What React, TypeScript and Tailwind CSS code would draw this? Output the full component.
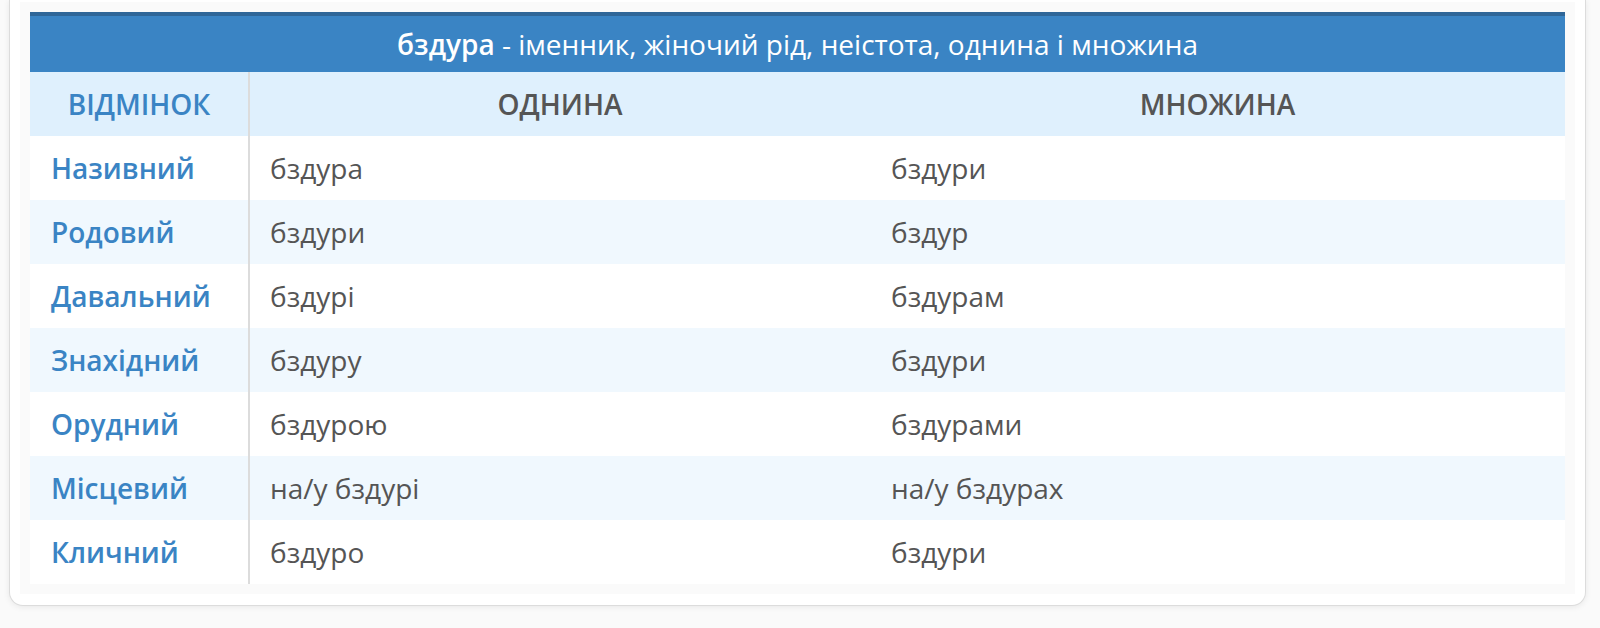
import React from 'react';

// Таблиця відмінювання іменника
const rows: [string, string, string][] = [
  ['Називний', 'бздура', 'бздури'],
  ['Родовий', 'бздури', 'бздур'],
  ['Давальний', 'бздурі', 'бздурам'],
  ['Знахідний', 'бздуру', 'бздури'],
  ['Орудний', 'бздурою', 'бздурами'],
  ['Місцевий', 'на/у бздурі', 'на/у бздурах'],
  ['Кличний', 'бздуро', 'бздури'],
];

export default function App() {
  return (
    <div
      className="min-h-[628px] bg-[#fafafa] pl-[9px] pr-[14px]"
      style={{ fontFamily: '"Open Sans", "Noto Sans", sans-serif' }}
    >
      <div className="bg-white border border-t-0 border-[#dcdcdc] rounded-b-[14px] shadow-[0_1px_6px_rgba(0,0,0,0.08)] px-[10px] pt-[2px] pb-[11px]">
        <div className="bg-[#fafafa] p-[10px]">
          <table className="w-full border-collapse table-fixed">
            <colgroup>
              <col className="w-[219px]" />
              <col className="w-[621px]" />
              <col />
            </colgroup>
            <thead>
              <tr>
                <th
                  colSpan={3}
                  className="h-[58px] p-0 bg-[#3a84c4] border-t-4 border-[#2f6698] text-white text-[28px] font-normal text-center leading-[54px]"
                >
                  <span className="font-semibold">бздура</span> - іменник, жіночий рід, неістота, однина і множина
                </th>
              </tr>
              <tr className="bg-[#dff0fd] h-[64px] uppercase text-[28px]">
                <th className="text-[#3a84c4] font-semibold text-center border-r-2 border-[#dcdcdc]">Відмінок</th>
                <th className="text-[#555] font-semibold text-center">Однина</th>
                <th className="text-[#555] font-semibold text-center">Множина</th>
              </tr>
            </thead>
            <tbody>
              {rows.map((r, i) => (
                <tr key={r[0]} className={`h-[64px] text-[28px] ${i % 2 === 1 ? 'bg-[#f0f8fe]' : 'bg-white'}`}>
                  <td className="pl-[21px] font-semibold text-[#3a84c4] border-r-2 border-[#dcdcdc]">{r[0]}</td>
                  <td className="pl-[20px] text-[#555]">{r[1]}</td>
                  <td className="pl-[21px] text-[#555]">{r[2]}</td>
                </tr>
              ))}
            </tbody>
          </table>
        </div>
      </div>
    </div>
  );
}
